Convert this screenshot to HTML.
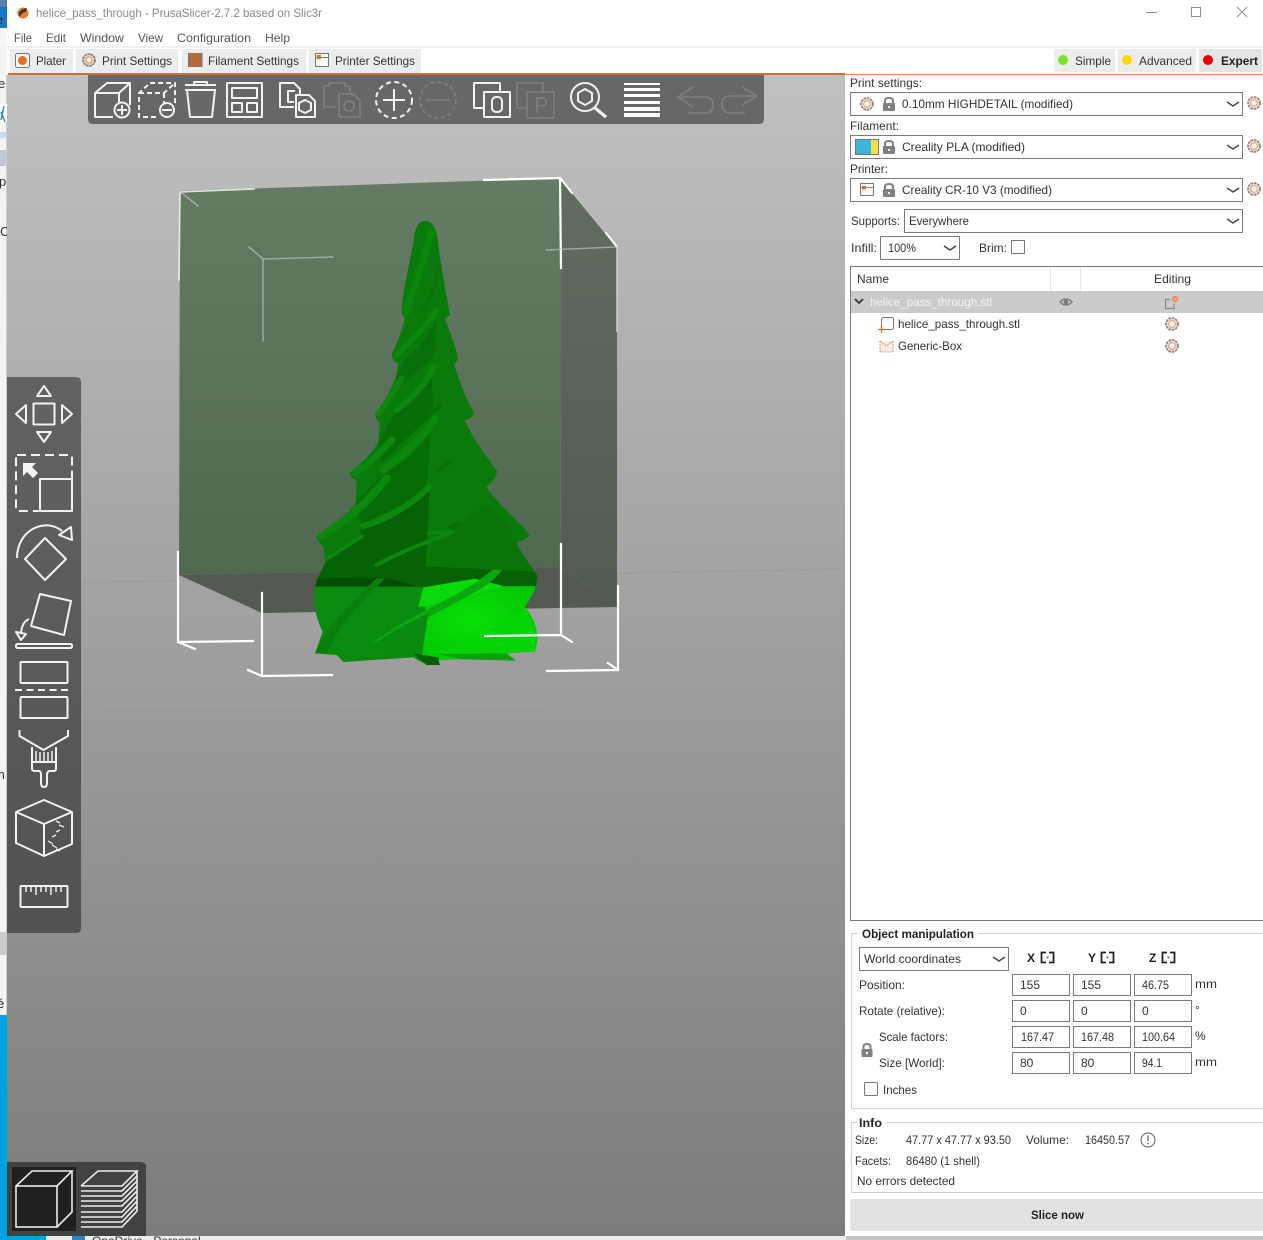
<!DOCTYPE html>
<html><head><meta charset="utf-8"><title>helice_pass_through - PrusaSlicer</title>
<style>
html,body{margin:0;padding:0;background:#fff;width:1263px;height:1240px;overflow:hidden}
svg{display:block;position:absolute;left:0;top:0}
text{font-family:"Liberation Sans",sans-serif;font-size:12px;fill:#333}
.b{font-weight:bold;fill:#222}
.i{fill:none;stroke:#f2f2f2;stroke-width:2;stroke-linejoin:round}
.f{fill:#fff;stroke:#7a7a7a;stroke-width:1}
.c{fill:none;stroke:#444;stroke-width:1.4}
.g{fill:none;stroke:#d0d0d0;stroke-width:1}
.w{fill:none;stroke:#fff;stroke-width:2.2}
</style></head><body>
<svg width="1263" height="1240" viewBox="0 0 1263 1240" xmlns="http://www.w3.org/2000/svg">
<defs>
<linearGradient id="vp" x1="0" y1="0" x2="0" y2="1"><stop offset="0" stop-color="#c0c0c0"/><stop offset=".45" stop-color="#a2a2a2"/><stop offset="1" stop-color="#7c7c7c"/></linearGradient>
<linearGradient id="lt" x1="0" y1="0" x2="0" y2="1"><stop offset="0" stop-color="#626262"/><stop offset="1" stop-color="#525252"/></linearGradient>
<linearGradient id="wall" x1="0" y1="0" x2="0" y2="1"><stop offset="0" stop-color="#657b64"/><stop offset="1" stop-color="#4f6a50"/></linearGradient>
<linearGradient id="rw" x1="0" y1="0" x2="0" y2="1"><stop offset="0" stop-color="#626c61"/><stop offset="1" stop-color="#525b53"/></linearGradient>
<radialGradient id="br" cx=".4" cy=".4" r=".7"><stop offset="0" stop-color="#09e009"/><stop offset="1" stop-color="#00c000"/></radialGradient>
<clipPath id="tree"><path d="M765 153 C790 153 800 175 805 225 C815 300 830 380 840 435 L825 447 C840 490 858 530 865 570 L852 583 C870 640 890 690 912 730 Q905 745 885 752 C910 810 950 860 982 905 Q975 935 948 950 C975 990 1040 1050 1080 1095 Q1065 1112 1040 1117 C1045 1140 1080 1180 1102 1218 L1095 1260 L1065 1312 C1090 1340 1103 1375 1103 1410 L1095 1445 L1010 1450 L1038 1472 L880 1468 L805 1470 L810 1485 L770 1485 L730 1462 L520 1476 L500 1455 L435 1450 L458 1385 C435 1340 425 1290 440 1230 L465 1180 L462 1130 Q445 1120 438 1100 C480 1065 530 1040 557 1000 L560 935 Q545 925 540 910 C570 880 610 850 625 815 L630 760 Q618 750 615 730 C640 700 665 660 678 620 L685 580 Q668 575 665 555 C680 520 695 490 705 445 Q695 435 695 415 C700 360 720 270 730 220 C735 170 745 153 765 153Z"/></clipPath>
</defs>

<!-- desktop remnants at the left edge -->
<rect x="0" y="0" width="7" height="1240" fill="#f4f4f4"/>
<rect x="6" y="75" width="1" height="1160" fill="#cfcfcf"/>
<rect x="0" y="0" width="7" height="44" fill="#0f6fc0"/>
<rect x="0" y="0" width="7" height="7" fill="#5a7fa8"/>
<rect x="0" y="8" width="7" height="20" fill="#1a78c8"/>
<rect x="0" y="28" width="7" height="17" fill="#f6f6f6"/>
<rect x="0" y="104" width="7" height="18" fill="#ffffff"/>
<path d="M4 106 L1 120 M1 112 L5 122" stroke="#2a86c8" stroke-width="1.4" fill="none"/>
<rect x="0" y="132" width="6" height="6" fill="#c4def5"/>
<rect x="0" y="150" width="6" height="16" fill="#c3c8d0"/>
<rect x="0" y="932" width="7" height="23" fill="#cbcbcb"/>
<rect x="0" y="1015" width="46" height="225" fill="#00a2e0"/>
<text x="-4" y="24" style="font-size:13px" fill="#fff">e</text>
<text x="-2" y="88" style="font-size:13px">e</text>
<text x="-1" y="186" style="font-size:13px">p</text>
<text x="0" y="236" style="font-size:13px">C</text>
<text x="-6" y="779" style="font-size:13px">m</text>
<text x="-3" y="1008" style="font-size:13px;fill:#223">é</text>
<rect x="46" y="1236" width="800" height="4" fill="#ececec"/>
<text x="92" y="1245" style="font-size:12px">OneDrive - Personal</text>
<rect x="72" y="1236" width="13" height="4" fill="#2a86c8"/>

<!-- 3D viewport -->
<rect x="7" y="75" width="838" height="1161" fill="url(#vp)"/>
<path d="M60 583 L840 569" stroke="#8d8d8d" stroke-width="1" opacity=".35"/>
<path d="M100 712 L840 707" stroke="#8a8a8a" stroke-width="1" opacity=".25"/>

<!-- print volume + tree -->
<polygon points="180,191 560,178 561,567 179,575" fill="url(#wall)"/>
<polygon points="560,178 617,247 617,607 561,567" fill="url(#rw)"/>
<polygon points="179,575 561,567 617,607 262,613" fill="#525a52"/>
<g transform="translate(170 170) scale(.33333)">
 <g clip-path="url(#tree)">
  <rect x="400" y="140" width="740" height="1110" fill="#0a7a0b"/>
  <!-- dark translucent band -->
  <polygon points="400,1205 1140,1205 1140,1250 400,1250" fill="#066406"/>
  <polygon points="400,1222 640,1222 760,1252 400,1252" fill="#034e03"/>
  <polygon points="640,1222 770,1190 1110,1195 1110,1248 760,1252" fill="#056205"/>
  <!-- lower uncovered part -->
  <rect x="400" y="1250" width="380" height="260" fill="#0a8c10"/>
  <polygon points="770,1250 1140,1248 1140,1500 755,1500" fill="url(#br)"/>
  <polygon points="745,1312 760,1252 915,1226 1000,1248 850,1290" fill="#08da0b"/>
  <path d="M435 1450 C470 1370 540 1300 620 1225 L645 1225 C570 1300 510 1360 470 1450Z" fill="#0a7f0e"/>
  <path d="M595 1430 C690 1350 800 1310 915 1240 L1020 1160 C1000 1210 950 1250 900 1275 C800 1330 700 1380 595 1430Z" fill="#0aa80e"/>
  <polygon points="595,1430 757,1447 775,1330 690,1372" fill="#0a8a0e"/>
  <path d="M757 1447 L905 1425 L940 1397 L1065 1312 L1103 1390 L1095 1445 L880 1452Z" fill="#04d404"/>
  <polygon points="500,1452 720,1450 730,1462 520,1476" fill="#0b8a0d"/>
  <polygon points="730,1450 805,1462 810,1485 770,1485" fill="#065f06"/>
  <polygon points="800,1452 1010,1450 1038,1472 880,1468" fill="#0ba00e"/>
  <!-- dark faces -->
  <polygon points="465,1180 575,1105 570,1075 700,1020 778,965 768,1190 640,1222 445,1225" fill="#056205"/>
  <polygon points="640,912 720,860 780,790 772,945 700,1005 575,1062 557,1000" fill="#066c06"/>
  <polygon points="680,720 730,680 785,600 790,730 715,800 635,880 625,815" fill="#076e07"/>
  <polygon points="700,575 750,530 800,450 790,560 690,650 678,620" fill="#076f07"/>
  <polygon points="775,1190 790,1100 870,1060 950,1000 1010,1060 1040,1117 1102,1218 1095,1205 790,1190" fill="#097509"/>
  <!-- ridge bands -->
  <g fill="none" stroke-linecap="round" stroke="#0c880e">
   <path d="M450 1098 C530 1055 590 1000 650 925" stroke-width="24"/>
   <path d="M580 1068 C650 1050 730 1000 778 950" stroke-width="18"/>
   <path d="M640 900 C690 860 760 810 795 745" stroke-width="22"/>
   <path d="M555 908 C600 880 630 850 665 810" stroke-width="20"/>
   <path d="M680 720 C720 690 770 640 792 590" stroke-width="18"/>
   <path d="M625 730 C650 700 675 660 695 625" stroke-width="18"/>
   <path d="M680 555 C710 520 770 470 800 420" stroke-width="16"/>
   <path d="M470 1165 L575 1100" stroke-width="10"/>
   <path d="M620 1185 C680 1150 760 1120 840 1090" stroke-width="12"/>
   <path d="M710 425 C730 350 765 270 785 180" stroke-width="22" stroke="#0b860b"/>
   <path d="M760 425 C790 370 805 320 805 280" stroke-width="12" stroke="#0a7409"/>
   <path d="M840 1075 L865 1060" stroke-width="14" stroke="#0a6f0a"/>
   <path d="M805 900 L835 880" stroke-width="14" stroke="#0a6f0a"/>
   <path d="M780 730 L812 705" stroke-width="14" stroke="#0a6f0a"/>
   <path d="M770 570 L795 530" stroke-width="12" stroke="#0a6f0a"/>
   <path d="M775 1090 L850 1085" stroke-width="10"/>
  </g>
 </g>
</g>
<!-- bed/volume wire lines -->
<g fill="none" stroke-linecap="square">
 <path d="M179 280 L180 192 L254 189" stroke="#f4f4f4" stroke-width="1.600" opacity=".85"/>
 <path d="M182 193 L198 206" stroke="#b8c2b8" stroke-width="1.400" opacity=".8"/>
 <path d="M484 180 L560 178 L561 268" class="w"/>
 <path d="M561 179 L617 247" stroke="#dfe4df" stroke-width="1.200" opacity=".5"/>
 <path d="M561 179 L572 193 M606 233 L617 247" stroke="#fff" stroke-width="2"/>
 <path d="M617 247 L617 331" stroke="#e0e4e0" stroke-width="1.500" opacity=".8"/>
 <path d="M546 250 L617 247" stroke="#b8c2b8" stroke-width="1.400" opacity=".7"/>
 <path d="M249 247 L263 259 L333 257 M263 259 L263 341" stroke="#b8c2b8" stroke-width="1.500" opacity=".7"/>
 <path d="M178 552 L178 642 L253 641 M178 642 L195 649" class="w"/>
 <path d="M262 593 L262 676 L332 675 M262 676 L248 670" class="w"/>
 <path d="M561 544 L561 635 L485 636 M561 635 L572 642" class="w"/>
 <path d="M618 586 L618 670 L547 671 M618 670 L608 663" class="w"/>
</g>

<!-- top toolbar -->
<path d="M88 75 H764 V119 Q764 124 759 124 H93 Q88 124 88 119Z" fill="#676767"/>
<g class="i">
 <path d="M113 117 H95 V93 L107 83 H130 V105 M95 93 H119 L130 83 M119 93 V103"/>
 <circle cx="122" cy="110" r="7.5"/><path d="M122 105 V115 M117 110 H127"/>
 <path d="M156 117 H139 V93 L150 83 H175 V105 M139 93 H164 L175 83 M164 93 V104" stroke-dasharray="5 3"/>
 <circle cx="167" cy="110" r="7"/><path d="M162 110 H172"/>
 <path d="M187 90 L190 117 H212 L215 90 M185 85 H216 M194 85 V82 H207 V85 M185 90 H216"/>
 <rect x="227" y="83" width="35" height="34"/><rect x="232" y="88" width="25" height="10"/><rect x="232" y="103" width="10" height="9"/><rect x="247" y="103" width="10" height="9"/>
 <path d="M294 107 H280 V83 H294 L300 89 V94 M295 91 H288 V102 H294"/>
 <path d="M296 95 H309 L315 101 V117 H296Z"/><polygon points="305,100 311,103 311,110 305,113 299,110 299,103"/>
</g>
<g fill="none" stroke="#7f7f7f" stroke-width="1.600">
 <path d="M337 107 H324 V86 H329 V83 H345 V86 H350 V93"/><path d="M339 94 H353 L360 100 V117 H339Z"/><circle cx="349" cy="106" r="5"/>
 <circle cx="438" cy="100" r="18" stroke-dasharray="4 3"/><path d="M426 100 H450"/>
 <path d="M527 108 H517 V83 H543 V92"/><rect x="527" y="92" width="27" height="26"/>
 <path d="M537 113 V98 H542 Q546 98 546 102 Q546 106 542 106 H537"/>
 <path d="M693 87 L678 97 L693 107 M678 97 H704 Q713 97 713 105 Q713 113 704 113 H688"/>
 <path d="M742 87 L757 96 L742 105 M757 96 H730 Q722 96 722 104 Q722 113 730 113 H745"/>
</g>
<g class="i">
 <circle cx="394" cy="100" r="18" stroke-dasharray="5 3.500"/><path d="M394 89 V111 M383 100 H405"/>
 <rect x="474" y="83" width="26" height="25"/><rect x="484" y="92" width="26" height="25" fill="#676767"/><rect x="492" y="97" width="10" height="15" rx="4"/>
 <circle cx="585" cy="97" r="14"/><polygon points="585,89 592,93 592,101 585,105 578,101 578,93"/>
</g>
<path d="M595 108 L606 117" stroke="#f4f4f4" stroke-width="3.200" fill="none"/>
<g fill="#fff"><rect x="624" y="83" width="36" height="2"/><rect x="624" y="88" width="36" height="3"/><rect x="624" y="94" width="36" height="3"/><rect x="624" y="101" width="36" height="3"/><rect x="624" y="107" width="36" height="4"/><rect x="624" y="113" width="36" height="4"/></g>

<!-- left toolbar -->
<path d="M7 377 H76 Q81 377 81 382 V928 Q81 933 76 933 H7Z" fill="url(#lt)"/>
<g class="i">
 <polygon points="44,386 37,396 51,396"/><rect x="33.500" y="403.500" width="21" height="21"/>
 <polygon points="16,414 26,405 26,423"/><polygon points="72,414 62,405 62,423"/><polygon points="37,432 51,432 44,442"/>
 <rect x="16" y="455" width="56" height="56" rx="1" stroke-dasharray="9 5"/>
 <rect x="40" y="479" width="32" height="32" fill="#5f5f5f"/>
 <path d="M17 558 C17 530 45 517 62 531"/><polygon points="71,527 59,535 72,540"/><polygon points="45,538 66,559 45,580 25,559"/>
 <polygon points="40,594 71,601 64,635 31,626"/><path d="M29 619 Q22 622 21 633"/><polygon points="16,632 26,634 21,640"/><rect x="16" y="644" width="56" height="4" rx="1.500"/>
 <rect x="20.500" y="662" width="47" height="21" rx="1"/><path d="M15 690 H72" stroke-dasharray="7 4.500"/><rect x="20.500" y="697" width="47" height="21" rx="1"/>
 <path d="M19.500 730 V736 L43.500 750 L68 736 V730"/>
 <path d="M32 747 V769 Q32 771 36 771 H39 Q41 771 41 775 V783 Q41 787 44 787 Q47 787 47 783 V775 Q47 771 50 771 H53 Q56 771 56 769 V747 M32 762 H56"/>
 <path d="M36 751 V761 M40 752 V761 M44 752 V761 M48 752 V761 M52 751 V761" stroke-width="1.500"/>
 <polygon points="44,800 72,812 72,844 44,856 16,843 16,812"/><path d="M16 812 L44 824 L72 812 M44 824 V856"/>
 <path d="M56 821 L60 823 M59 825 L64 827 M56 832 L60 830 M52 837 L56 835 M48 841 L53 844 M52 845 L57 848 M56 849 L60 851" stroke-width="1.300"/>
 <rect x="20.500" y="886" width="47" height="21" rx="1"/>
 <path d="M26 886 V892 M31 886 V892 M36 886 V895 M41 886 V892 M46 886 V892 M51 886 V895 M56 886 V892 M61 886 V892" stroke-width="1.500"/>
</g>
<polygon points="23,463 36,463 32,467 38,473 33,478 27,472 23,476" fill="#f4f4f4"/>

<!-- view toolbar -->
<path d="M7 1162 H141 Q146 1162 146 1167 V1236 H7Z" fill="#424242"/>
<rect x="12" y="1167" width="64" height="64" fill="#202020"/>
<g fill="none" stroke="#ececec" stroke-width="1.600">
 <rect x="16" y="1186" width="41" height="41"/><path d="M16 1186 L32 1171 H72 L57 1186 M72 1171 V1212 L57 1227"/>
 <path d="M81 1186 L98 1171 H137 L122 1186 H81 M137 1171 V1176 L122 1191 H81 M137 1176 V1181 L122 1196 H81 M137 1181 V1186 L122 1201 H81 M137 1186 V1191 L122 1206 H81 M137 1191 V1196 L122 1212 H81 M137 1196 V1201 L122 1217 H81 M137 1201 V1206 L122 1222 H81 M137 1206 V1211 L122 1227 H81"/>
</g>

<!-- title bar -->
<rect x="7" y="0" width="1256" height="47" fill="#fff"/>
<circle cx="23" cy="13" r="5.500" fill="#ee7a2a"/>
<path d="M18.500 14 Q20 9 27 8 L26 12 Q22 12 19.500 17Z" fill="#3a3a3a"/>
<text x="36" y="17" textLength="286" lengthAdjust="spacingAndGlyphs" style="fill:#8a8a8a">helice_pass_through - PrusaSlicer-2.7.2 based on Slic3r</text>
<path d="M1146 12.500 H1157" stroke="#8f8f8f" stroke-width="1"/>
<rect x="1191.500" y="7.500" width="9" height="9" fill="none" stroke="#8f8f8f" stroke-width="1"/>
<path d="M1237 7 L1247 17 M1247 7 L1237 17" stroke="#8f8f8f" stroke-width="1"/>
<text x="14" y="42" textLength="18" lengthAdjust="spacingAndGlyphs" style="fill:#555">File</text>
<text x="46" y="42" textLength="20" lengthAdjust="spacingAndGlyphs" style="fill:#555">Edit</text>
<text x="80" y="42" textLength="44" lengthAdjust="spacingAndGlyphs" style="fill:#555">Window</text>
<text x="138" y="42" textLength="25" lengthAdjust="spacingAndGlyphs" style="fill:#555">View</text>
<text x="177" y="42" textLength="74" lengthAdjust="spacingAndGlyphs" style="fill:#555">Configuration</text>
<text x="265" y="42" textLength="25" lengthAdjust="spacingAndGlyphs" style="fill:#555">Help</text>
<rect x="7" y="46" width="1256" height="2" fill="#f1f1f1"/>

<!-- tabs -->
<rect x="10" y="49" width="63" height="24" fill="#ececec"/>
<rect x="76" y="49" width="102" height="24" fill="#ececec"/>
<rect x="182" y="49" width="124" height="24" fill="#ececec"/>
<rect x="309" y="49" width="112" height="24" fill="#ececec"/>
<rect x="8" y="73" width="837" height="2" fill="#dc6a2c"/>
<rect x="845" y="74" width="418" height="1" fill="#e88a58"/>
<rect x="15.500" y="53.500" width="14" height="14" rx="2" fill="#f6f6f6" stroke="#777"/><circle cx="22.500" cy="60.500" r="4.500" fill="#ed6b21"/>
<text x="36" y="65" textLength="30" lengthAdjust="spacingAndGlyphs">Plater</text>
<circle cx="89" cy="60" r="6" fill="#f1cdb8" stroke="#777" stroke-width="1.600" stroke-dasharray="2.500 .8"/><circle cx="89" cy="60" r="3" fill="#f7f7f7" stroke="#e88a58"/>
<text x="102" y="65" textLength="70" lengthAdjust="spacingAndGlyphs">Print Settings</text>
<rect x="189" y="53" width="12" height="14" fill="#b8663a"/><rect x="188" y="53" width="1.500" height="14" fill="#777"/><rect x="201" y="53" width="1.500" height="14" fill="#777"/>
<text x="208" y="65" textLength="91" lengthAdjust="spacingAndGlyphs">Filament Settings</text>
<rect x="315.500" y="53.500" width="13" height="13" fill="#fafafa" stroke="#777"/><path d="M316 57.500 H328" stroke="#777"/><rect x="317" y="55" width="4" height="4" fill="#ed6b21"/>
<text x="335" y="65" textLength="80" lengthAdjust="spacingAndGlyphs">Printer Settings</text>

<!-- mode buttons -->
<rect x="1054" y="49" width="61" height="23" fill="#ececec"/>
<rect x="1118" y="49" width="78" height="23" fill="#ececec"/>
<rect x="1199" y="49" width="63" height="23" fill="#e4e4e4"/>
<circle cx="1063" cy="60" r="5" fill="#7be32e"/><circle cx="1127" cy="60" r="5" fill="#ffd800"/><circle cx="1208" cy="60" r="5" fill="#e60000"/>
<text x="1075" y="65" textLength="36" lengthAdjust="spacingAndGlyphs">Simple</text>
<text x="1139" y="65" textLength="53" lengthAdjust="spacingAndGlyphs">Advanced</text>
<text x="1221" y="65" textLength="37" lengthAdjust="spacingAndGlyphs" class="b">Expert</text>

<!-- sidebar -->
<text x="850" y="87" textLength="72" lengthAdjust="spacingAndGlyphs">Print settings:</text>
<rect x="850.500" y="92.500" width="392" height="23" class="f"/>
<text x="850" y="130" textLength="49" lengthAdjust="spacingAndGlyphs">Filament:</text>
<rect x="850.500" y="135.500" width="392" height="23" class="f"/>
<text x="850" y="173" textLength="38" lengthAdjust="spacingAndGlyphs">Printer:</text>
<rect x="850.500" y="178.500" width="392" height="23" class="f"/>

<!-- gears -->
<g fill="#f9dcc8" stroke="#8a8a8a" stroke-width="1.800" stroke-dasharray="2.600 .9">
 <circle cx="867" cy="104" r="6"/><circle cx="1254" cy="103" r="6"/><circle cx="1254" cy="146" r="6"/><circle cx="1254" cy="189" r="6"/><circle cx="1172" cy="324" r="6"/><circle cx="1172" cy="346" r="6"/>
</g>
<g fill="#fff" stroke="#ec9060" stroke-width="1">
 <circle cx="867" cy="104" r="3.300"/><circle cx="1254" cy="103" r="3.300"/><circle cx="1254" cy="146" r="3.300"/><circle cx="1254" cy="189" r="3.300"/><circle cx="1172" cy="324" r="3.300"/><circle cx="1172" cy="346" r="3.300"/>
</g>
<!-- locks -->
<g fill="#808080">
 <path d="M885 104 V100.500 Q885 98 889 98 Q893 98 893 100.500 V104" fill="none" stroke="#808080" stroke-width="2"/><rect x="883" y="103" width="12" height="8" rx="1"/>
 <path d="M885 147 V143.500 Q885 141 889 141 Q893 141 893 143.500 V147" fill="none" stroke="#808080" stroke-width="2"/><rect x="883" y="146" width="12" height="8" rx="1"/>
 <path d="M885 190 V186.500 Q885 184 889 184 Q893 184 893 186.500 V190" fill="none" stroke="#808080" stroke-width="2"/><rect x="883" y="189" width="12" height="8" rx="1"/>
 <path d="M863.500 1050 V1046.500 Q863.500 1044 867 1044 Q870.500 1044 870.500 1046.500 V1050" fill="none" stroke="#808080" stroke-width="2"/><rect x="861.500" y="1049" width="11" height="8" rx="1"/>
</g>
<g fill="#fff"><rect x="888" y="106" width="2" height="2"/><rect x="888" y="149" width="2" height="2"/><rect x="888" y="192" width="2" height="2"/><rect x="866" y="1052" width="2" height="2"/></g>
<text x="902" y="108" textLength="171" lengthAdjust="spacingAndGlyphs">0.10mm HIGHDETAIL (modified)</text>
<rect x="855.500" y="139.500" width="23" height="15" fill="#3cb6d8" stroke="#777"/><rect x="871" y="140" width="7" height="14" fill="#f4e04a"/>
<text x="902" y="151" textLength="123" lengthAdjust="spacingAndGlyphs">Creality PLA (modified)</text>
<rect x="860.500" y="183.500" width="13" height="12" fill="#fafafa" stroke="#777"/><rect x="862" y="186" width="4" height="3.500" fill="#ed6b21"/><path d="M861 187.500 H873" stroke="#888"/>
<text x="902" y="194" textLength="150" lengthAdjust="spacingAndGlyphs">Creality CR-10 V3 (modified)</text>
<text x="851" y="225" textLength="49" lengthAdjust="spacingAndGlyphs">Supports:</text>
<rect x="904.500" y="209.500" width="338" height="23" class="f"/>
<text x="909" y="225" textLength="60" lengthAdjust="spacingAndGlyphs">Everywhere</text>
<path d="M1227 102 L1233 106 L1239 102 M1227 145 L1233 149 L1239 145 M1227 188 L1233 192 L1239 188 M1227 219 L1233 223 L1239 219" class="c"/>
<text x="851" y="252" textLength="26" lengthAdjust="spacingAndGlyphs">Infill:</text>
<rect x="880.500" y="236.500" width="79" height="23" class="f"/>
<path d="M944 246 L950 250 L956 246" class="c"/>
<text x="888" y="252" textLength="28" lengthAdjust="spacingAndGlyphs">100%</text>
<text x="979" y="252" textLength="28" lengthAdjust="spacingAndGlyphs">Brim:</text>
<rect x="1011.500" y="240.500" width="13" height="13" fill="#fff" stroke="#777"/>

<!-- object list -->
<path d="M1263 266.500 H850.500 V920.500 H1263" fill="none" stroke="#777"/>
<path d="M1050.500 267 V291 M1080.500 267 V291" stroke="#e6e6e6"/>
<text x="857" y="283" textLength="32" lengthAdjust="spacingAndGlyphs">Name</text>
<text x="1154" y="283" textLength="37" lengthAdjust="spacingAndGlyphs">Editing</text>
<rect x="851" y="291" width="412" height="22" fill="#cbcbcb"/>
<path d="M855 299 L859 303 L863 299" fill="none" stroke="#333" stroke-width="1.800"/>
<text x="870" y="306" textLength="122" lengthAdjust="spacingAndGlyphs" style="fill:#f2f2f2">helice_pass_through.stl</text>
<path d="M1060 302 Q1066 296 1072 302 Q1066 308 1060 302Z" fill="none" stroke="#7a7a7a" stroke-width="1.400"/><circle cx="1066" cy="302" r="2.300" fill="#7a7a7a"/>
<path d="M1170 299.500 H1165.500 V308.500 H1174 V303.500" fill="none" stroke="#888" stroke-width="1.200"/><circle cx="1175" cy="299" r="2.500" fill="#f0a070" stroke="#e87a3a"/>
<rect x="881.500" y="317.500" width="12" height="12" rx="2" fill="none" stroke="#777"/>
<path d="M881.500 326 V333 M878 329.500 H885" stroke="#ed6b21" stroke-width="1.200"/>
<text x="898" y="328" textLength="122" lengthAdjust="spacingAndGlyphs">helice_pass_through.stl</text>
<path d="M880 341 L886 346 L893 341 M880 341 V352 H893 V341" fill="#f8ece4" stroke="#d89a78" stroke-width="1" stroke-dasharray="2 1"/>
<text x="898" y="350" textLength="64" lengthAdjust="spacingAndGlyphs">Generic-Box</text>

<!-- object manipulation -->
<path d="M858 933.500 H851.500 V1108.500 H1263 M978 933.500 H1263" class="g"/>
<text x="862" y="938" textLength="112" lengthAdjust="spacingAndGlyphs" class="b">Object manipulation</text>
<rect x="859.500" y="947.500" width="149" height="23" class="f"/>
<path d="M993 957 L999 961 L1005 957" class="c"/>
<text x="864" y="963" textLength="97" lengthAdjust="spacingAndGlyphs">World coordinates</text>
<text x="1027" y="962" class="b">X</text><text x="1088" y="962" class="b">Y</text><text x="1149" y="962" class="b">Z</text>
<g fill="none" stroke="#222" stroke-width="1.800">
 <path d="M1046 952.500 H1041.500 V962.500 H1046 M1049 952.500 H1053.500 V962.500 H1049"/>
 <path d="M1106 952.500 H1101.500 V962.500 H1106 M1109 952.500 H1113.500 V962.500 H1109"/>
 <path d="M1167 952.500 H1162.500 V962.500 H1167 M1170 952.500 H1174.500 V962.500 H1170"/>
</g>
<g fill="#666"><circle cx="1047.500" cy="957.500" r="1"/><circle cx="1107.500" cy="957.500" r="1"/><circle cx="1168.500" cy="957.500" r="1"/></g>
<text x="859" y="989" textLength="46" lengthAdjust="spacingAndGlyphs">Position:</text>
<text x="859" y="1015" textLength="86" lengthAdjust="spacingAndGlyphs">Rotate (relative):</text>
<text x="879" y="1041" textLength="69" lengthAdjust="spacingAndGlyphs">Scale factors:</text>
<text x="879" y="1067" textLength="66" lengthAdjust="spacingAndGlyphs">Size [World]:</text>
<g class="f">
 <rect x="1012.500" y="974.500" width="57" height="21"/><rect x="1073.500" y="974.500" width="57" height="21"/><rect x="1134.500" y="974.500" width="57" height="21"/>
 <rect x="1012.500" y="1000.500" width="57" height="21"/><rect x="1073.500" y="1000.500" width="57" height="21"/><rect x="1134.500" y="1000.500" width="57" height="21"/>
 <rect x="1012.500" y="1026.500" width="57" height="21"/><rect x="1073.500" y="1026.500" width="57" height="21"/><rect x="1134.500" y="1026.500" width="57" height="21"/>
 <rect x="1012.500" y="1052.500" width="57" height="21"/><rect x="1073.500" y="1052.500" width="57" height="21"/><rect x="1134.500" y="1052.500" width="57" height="21"/>
</g>
<text x="1020" y="989">155</text><text x="1081" y="989">155</text><text x="1142" y="989" textLength="27" lengthAdjust="spacingAndGlyphs">46.75</text>
<text x="1020" y="1015">0</text><text x="1081" y="1015">0</text><text x="1142" y="1015">0</text>
<text x="1021" y="1041" textLength="33" lengthAdjust="spacingAndGlyphs">167.47</text><text x="1081" y="1041" textLength="33" lengthAdjust="spacingAndGlyphs">167.48</text><text x="1142" y="1041" textLength="33" lengthAdjust="spacingAndGlyphs">100.64</text>
<text x="1020" y="1067">80</text><text x="1081" y="1067">80</text><text x="1142" y="1067" textLength="20" lengthAdjust="spacingAndGlyphs">94.1</text>
<text x="1195" y="988" textLength="22" lengthAdjust="spacingAndGlyphs">mm</text><text x="1195" y="1014">°</text><text x="1195" y="1040">%</text><text x="1195" y="1066" textLength="22" lengthAdjust="spacingAndGlyphs">mm</text>
<rect x="864.500" y="1082.500" width="13" height="13" rx="1" fill="#fff" stroke="#777"/>
<text x="883" y="1094" textLength="34" lengthAdjust="spacingAndGlyphs">Inches</text>

<!-- info -->
<path d="M857 1122.500 H851.500 V1192.500 H1263 M886 1122.500 H1263" class="g"/>
<text x="859" y="1127" textLength="23" lengthAdjust="spacingAndGlyphs" class="b">Info</text>
<text x="855" y="1144" textLength="23" lengthAdjust="spacingAndGlyphs">Size:</text>
<text x="906" y="1144" textLength="105" lengthAdjust="spacingAndGlyphs">47.77 x 47.77 x 93.50</text>
<text x="1026" y="1144" textLength="43" lengthAdjust="spacingAndGlyphs">Volume:</text>
<text x="1085" y="1144" textLength="45" lengthAdjust="spacingAndGlyphs">16450.57</text>
<circle cx="1148" cy="1140" r="7" fill="none" stroke="#777" stroke-width="1.200"/><path d="M1148 1135.500 V1141" stroke="#777" stroke-width="1.500"/><circle cx="1148" cy="1143.500" r=".9" fill="#777"/>
<text x="855" y="1165" textLength="36" lengthAdjust="spacingAndGlyphs">Facets:</text>
<text x="906" y="1165" textLength="74" lengthAdjust="spacingAndGlyphs">86480 (1 shell)</text>
<text x="857" y="1185" textLength="98" lengthAdjust="spacingAndGlyphs">No errors detected</text>
<rect x="850" y="1199" width="413" height="32" fill="#e2e2e2"/>
<text x="1031" y="1219" textLength="53" lengthAdjust="spacingAndGlyphs" class="b">Slice now</text>
<rect x="846" y="1236" width="417" height="4" fill="#c4c4c4"/>
</svg>
</body></html>
